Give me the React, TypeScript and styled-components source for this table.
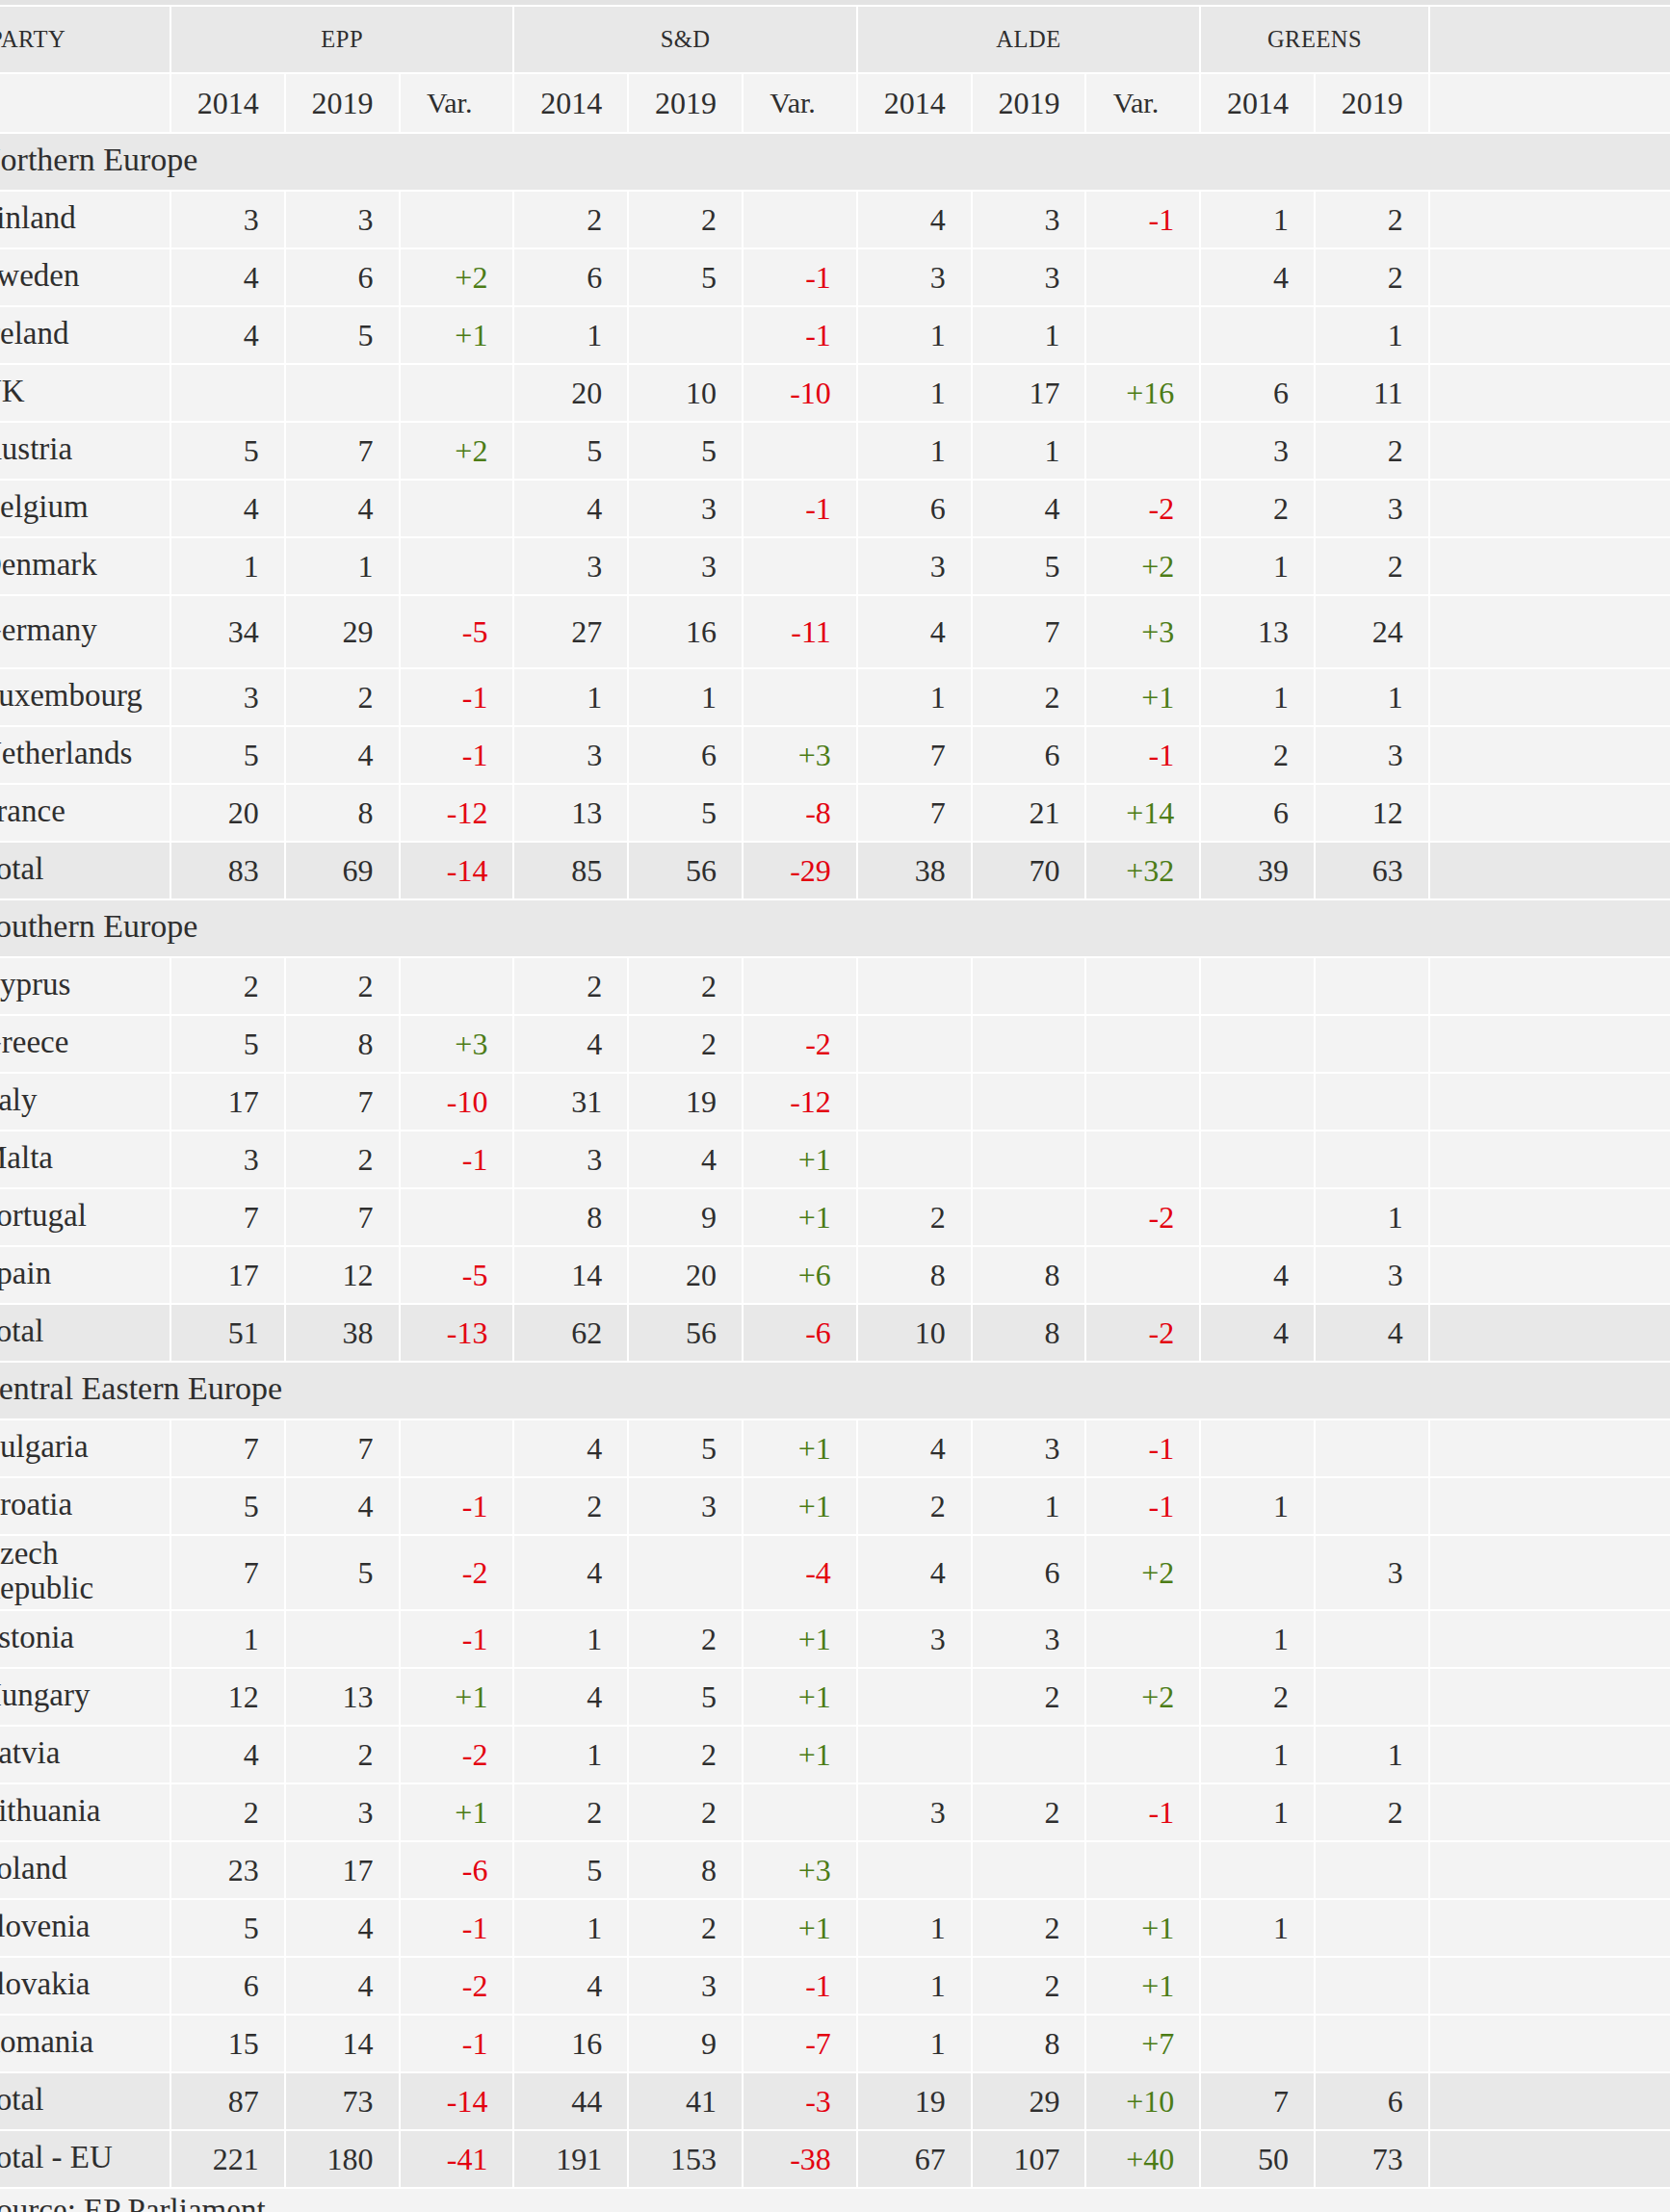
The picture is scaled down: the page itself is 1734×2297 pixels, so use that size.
import React, { useLayoutEffect, useRef } from "react";
import styled, { createGlobalStyle, css } from "styled-components";

const GlobalStyle = createGlobalStyle`
  html, body { margin: 0; padding: 0; background: #f3f3f3; }
  body {
    font-family: "Liberation Serif", "Times New Roman", serif;
    color: #2e2e2e;
  }
`;

const Viewport = styled.div`
  overflow: hidden;
  border-top: 5px solid #e3e3e3;
  background: #f3f3f3;
`;

const Inner = styled.div`
  width: 1800px;
`;

const Table = styled.table`
  border-collapse: collapse;
  table-layout: fixed;
  width: 1800px;
  font-size: 32px;
  font-variant-numeric: oldstyle-nums;
`;

const LabelCol = styled.col`
  width: 216px;
`;
const DataCol = styled.col`
  width: 118.8px;
`;
const RestCol = styled.col`
  width: auto;
`;

const cellBase = css`
  border: 2px solid #ffffff;
  font-weight: normal;
  vertical-align: middle;
  box-sizing: border-box;
`;

const GroupHead = styled.th`
  ${cellBase};
  height: 70px;
  padding: 0;
  background: #e8e8e8;
  font-size: 24.5px;
  letter-spacing: 0.5px;
  text-align: center;
`;

const PartyHead = styled(GroupHead)`
  text-align: left;
  padding-left: 27px;
`;

const YearHead = styled.th<{ $var?: boolean }>`
  ${cellBase};
  height: 62px;
  padding: 0 ${(p) => (p.$var ? "42px" : "26px")} 0 0;
  background: #f3f3f3;
  text-align: right;
  font-size: ${(p) => (p.$var ? "30px" : "32px")};
`;

const Row = styled.tr<{ $total?: boolean }>`
  background: ${(p) => (p.$total ? "#e8e8e8" : "#f3f3f3")};
`;

const LabelCell = styled.td<{ $tall?: boolean }>`
  ${cellBase};
  height: ${(p) => (p.$tall ? "76px" : "60px")};
  padding: 0 8px 4px 16px;
  font-size: 33px;
  line-height: 36px;
  text-align: left;
`;

const NumCell = styled.td<{ $tone?: "up" | "down" }>`
  ${cellBase};
  padding: 0 26px 0 0;
  text-align: right;
  white-space: nowrap;
  color: ${(p) => (p.$tone === "up" ? "#4c7c16" : p.$tone === "down" ? "#e3000f" : "inherit")};
`;

const EmptyCell = styled.td`
  ${cellBase};
`;

const RegionRow = styled.tr`
  background: #e8e8e8;
`;

const RegionCell = styled.td`
  ${cellBase};
  height: 60px;
  padding: 0 0 4px 14px;
  font-size: 34px;
  text-align: left;
`;

const Source = styled.p`
  margin: 0;
  padding: 4px 0 0 18px;
  font-size: 33px;
  line-height: 36px;
`;

type V = number | string | null;
type Line = { label: string; v: V[]; tall?: boolean; total?: boolean };
type Section = { name: string; rows: Line[] };

const _ = null;

const sections: Section[] = [
  {
    name: "Northern Europe",
    rows: [
      { label: "Finland", v: [3, 3, _, 2, 2, _, 4, 3, "-1", 1, 2] },
      { label: "Sweden", v: [4, 6, "+2", 6, 5, "-1", 3, 3, _, 4, 2] },
      { label: "Ireland", v: [4, 5, "+1", 1, _, "-1", 1, 1, _, _, 1] },
      { label: "UK", v: [_, _, _, 20, 10, "-10", 1, 17, "+16", 6, 11] },
      { label: "Austria", v: [5, 7, "+2", 5, 5, _, 1, 1, _, 3, 2] },
      { label: "Belgium", v: [4, 4, _, 4, 3, "-1", 6, 4, "-2", 2, 3] },
      { label: "Denmark", v: [1, 1, _, 3, 3, _, 3, 5, "+2", 1, 2] },
      { label: "Germany", tall: true, v: [34, 29, "-5", 27, 16, "-11", 4, 7, "+3", 13, 24] },
      { label: "Luxembourg", v: [3, 2, "-1", 1, 1, _, 1, 2, "+1", 1, 1] },
      { label: "Netherlands", v: [5, 4, "-1", 3, 6, "+3", 7, 6, "-1", 2, 3] },
      { label: "France", v: [20, 8, "-12", 13, 5, "-8", 7, 21, "+14", 6, 12] },
      { label: "Total", total: true, v: [83, 69, "-14", 85, 56, "-29", 38, 70, "+32", 39, 63] },
    ],
  },
  {
    name: "Southern Europe",
    rows: [
      { label: "Cyprus", v: [2, 2, _, 2, 2, _, _, _, _, _, _] },
      { label: "Greece", v: [5, 8, "+3", 4, 2, "-2", _, _, _, _, _] },
      { label: "Italy", v: [17, 7, "-10", 31, 19, "-12", _, _, _, _, _] },
      { label: "Malta", v: [3, 2, "-1", 3, 4, "+1", _, _, _, _, _] },
      { label: "Portugal", v: [7, 7, _, 8, 9, "+1", 2, _, "-2", _, 1] },
      { label: "Spain", v: [17, 12, "-5", 14, 20, "+6", 8, 8, _, 4, 3] },
      { label: "Total", total: true, v: [51, 38, "-13", 62, 56, "-6", 10, 8, "-2", 4, 4] },
    ],
  },
  {
    name: "Central Eastern Europe",
    rows: [
      { label: "Bulgaria", v: [7, 7, _, 4, 5, "+1", 4, 3, "-1", _, _] },
      { label: "Croatia", v: [5, 4, "-1", 2, 3, "+1", 2, 1, "-1", 1, _] },
      { label: "Czech Republic", v: [7, 5, "-2", 4, _, "-4", 4, 6, "+2", _, 3] },
      { label: "Estonia", v: [1, _, "-1", 1, 2, "+1", 3, 3, _, 1, _] },
      { label: "Hungary", v: [12, 13, "+1", 4, 5, "+1", _, 2, "+2", 2, _] },
      { label: "Latvia", v: [4, 2, "-2", 1, 2, "+1", _, _, _, 1, 1] },
      { label: "Lithuania", v: [2, 3, "+1", 2, 2, _, 3, 2, "-1", 1, 2] },
      { label: "Poland", v: [23, 17, "-6", 5, 8, "+3", _, _, _, _, _] },
      { label: "Slovenia", v: [5, 4, "-1", 1, 2, "+1", 1, 2, "+1", 1, _] },
      { label: "Slovakia", v: [6, 4, "-2", 4, 3, "-1", 1, 2, "+1", _, _] },
      { label: "Romania", v: [15, 14, "-1", 16, 9, "-7", 1, 8, "+7", _, _] },
      { label: "Total", total: true, v: [87, 73, "-14", 44, 41, "-3", 19, 29, "+10", 7, 6] },
    ],
  },
];

const euTotal: Line = {
  label: "Total - EU",
  total: true,
  v: [221, 180, "-41", 191, 153, "-38", 67, 107, "+40", 50, 73],
};

const groups = [
  { name: "EPP", span: 3 },
  { name: "S&D", span: 3 },
  { name: "ALDE", span: 3 },
  { name: "GREENS", span: 2 },
];

const yearHeads = ["2014", "2019", "Var.", "2014", "2019", "Var.", "2014", "2019", "Var.", "2014", "2019"];

function toneOf(v: V): "up" | "down" | undefined {
  if (typeof v !== "string") return undefined;
  if (v.startsWith("+")) return "up";
  if (v.startsWith("-")) return "down";
  return undefined;
}

function DataRow({ line }: { line: Line }) {
  return (
    <Row $total={line.total}>
      <LabelCell $tall={line.tall}>{line.label}</LabelCell>
      {line.v.map((v, i) => (
        <NumCell key={i} $tone={toneOf(v)}>
          {v ?? ""}
        </NumCell>
      ))}
      <EmptyCell />
    </Row>
  );
}

export default function App() {
  const ref = useRef<HTMLDivElement>(null);
  useLayoutEffect(() => {
    if (ref.current) ref.current.scrollLeft = 40;
  }, []);

  return (
    <>
      <GlobalStyle />
      <Viewport ref={ref}>
        <Inner>
          <Table>
            <colgroup>
              <LabelCol />
              {yearHeads.map((_y, i) => (
                <DataCol key={i} />
              ))}
              <RestCol />
            </colgroup>
            <thead>
              <tr>
                <PartyHead>PARTY</PartyHead>
                {groups.map((g) => (
                  <GroupHead key={g.name} colSpan={g.span}>
                    {g.name}
                  </GroupHead>
                ))}
                <GroupHead />
              </tr>
              <tr>
                <YearHead />
                {yearHeads.map((y, i) => (
                  <YearHead key={i} $var={y === "Var."}>
                    {y}
                  </YearHead>
                ))}
                <YearHead />
              </tr>
            </thead>
            <tbody>
              {sections.map((s) => (
                <React.Fragment key={s.name}>
                  <RegionRow>
                    <RegionCell colSpan={13}>{s.name}</RegionCell>
                  </RegionRow>
                  {s.rows.map((r, i) => (
                    <DataRow key={i} line={r} />
                  ))}
                </React.Fragment>
              ))}
              <DataRow line={euTotal} />
            </tbody>
          </Table>
          <Source>Source: EP Parliament</Source>
        </Inner>
      </Viewport>
    </>
  );
}
